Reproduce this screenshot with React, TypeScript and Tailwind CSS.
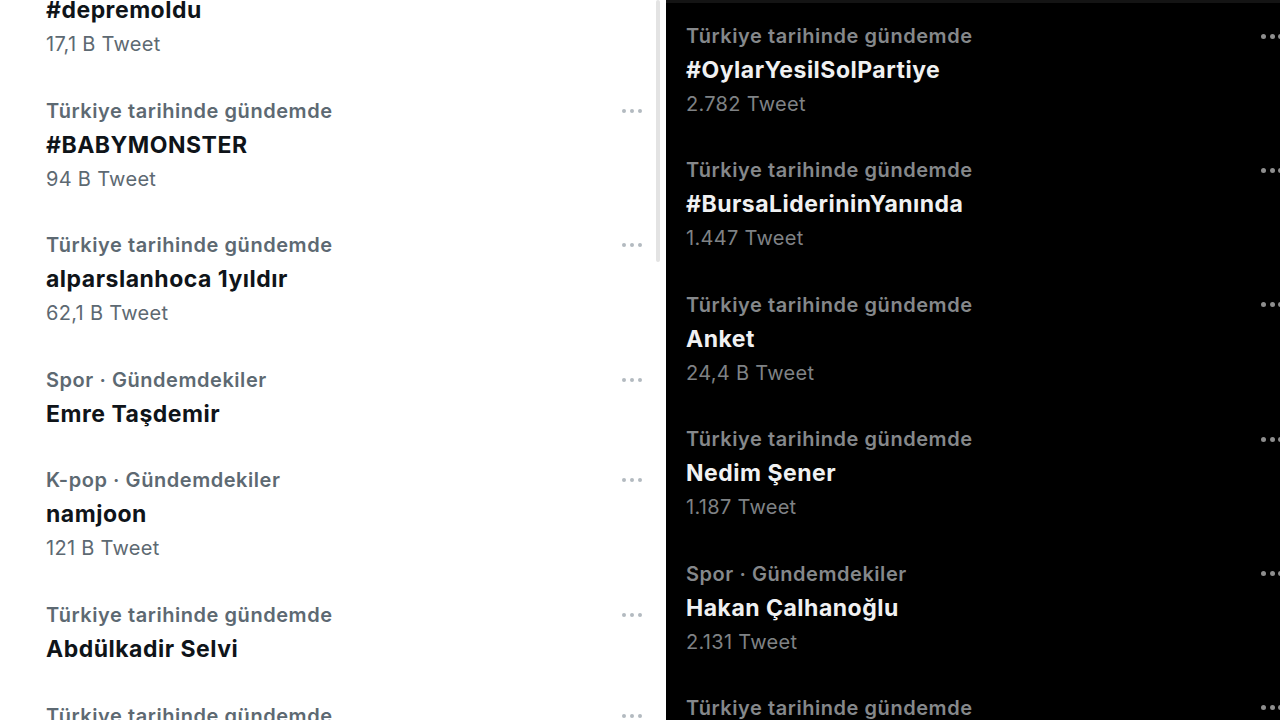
import React from 'react';

interface Trend {
  label: string;
  title: string;
  count?: string;
}

const leftTrends: Trend[] = [
  { label: 'Türkiye tarihinde gündemde', title: '#depremoldu', count: '17,1 B Tweet' },
  { label: 'Türkiye tarihinde gündemde', title: '#BABYMONSTER', count: '94 B Tweet' },
  { label: 'Türkiye tarihinde gündemde', title: 'alparslanhoca 1yıldır', count: '62,1 B Tweet' },
  { label: 'Spor · Gündemdekiler', title: 'Emre Taşdemir' },
  { label: 'K-pop · Gündemdekiler', title: 'namjoon', count: '121 B Tweet' },
  { label: 'Türkiye tarihinde gündemde', title: 'Abdülkadir Selvi' },
  { label: 'Türkiye tarihinde gündemde', title: 'Kemal Kılıçdaroğlu', count: '88 B Tweet' },
];

const rightTrends: Trend[] = [
  { label: 'Türkiye tarihinde gündemde', title: '#OylarYesilSolPartiye', count: '2.782 Tweet' },
  { label: 'Türkiye tarihinde gündemde', title: '#BursaLiderininYanında', count: '1.447 Tweet' },
  { label: 'Türkiye tarihinde gündemde', title: 'Anket', count: '24,4 B Tweet' },
  { label: 'Türkiye tarihinde gündemde', title: 'Nedim Şener', count: '1.187 Tweet' },
  { label: 'Spor · Gündemdekiler', title: 'Hakan Çalhanoğlu', count: '2.131 Tweet' },
  { label: 'Türkiye tarihinde gündemde', title: 'Muharrem İnce', count: '45 B Tweet' },
];

const Dots: React.FC<{ dark?: boolean }> = ({ dark }) => (
  <div className={`flex items-center h-[34px] ${dark ? 'gap-[3.5px] mr-[-3px]' : 'gap-[4px] mr-[1px]'}`}>
    {[0, 1, 2].map(i => (
      <span
        key={i}
        className={`rounded-full ${dark ? 'w-[5px] h-[5px] bg-[#8e8e8e]' : 'w-[4px] h-[4px] bg-[#b3bac0]'}`}
      />
    ))}
  </div>
);

const TrendRow: React.FC<{ trend: Trend; dark?: boolean }> = ({ trend, dark }) => (
  <div className={`flex justify-between items-start pt-[16px] ${dark ? 'pb-[16.4px]' : 'pb-[16.6px]'}`}>
    <div className="flex flex-col whitespace-nowrap">
      <span className={`text-[20px] leading-[34px] font-semibold tracking-[0.55px] ${dark ? 'text-[#85888b]' : 'text-[#5d6972]'}`}>
        {trend.label}
      </span>
      <span className={`text-[23px] leading-[34px] font-bold tracking-[0.5px] ${dark ? 'text-[#f0f1f2]' : 'text-[#0f1419]'}`}>
        {trend.title}
      </span>
      {trend.count && (
        <span className={`text-[20px] leading-[34px] tracking-[0.3px] ${dark ? 'text-[#7f8285]' : 'text-[#5d6972]'}`}>
          {trend.count}
        </span>
      )}
    </div>
    <Dots dark={dark} />
  </div>
);

export default function App() {
  return (
    <div className="flex w-[1280px] h-[720px] overflow-hidden" style={{ fontFamily: 'Inter, "Noto Sans", sans-serif' }}>
      <div className="flex w-[666px] bg-white">
        <div className="flex-1 flex flex-col pl-[46px] pr-[13px] mt-[-57px]">
          {leftTrends.map((t, i) => (
            <TrendRow key={i} trend={t} />
          ))}
        </div>
        <div className="w-[4px]">
          <div className="h-[262px] bg-[#e3e3e3] rounded-full" />
        </div>
        <div className="w-[6px]" />
      </div>
      <div className="flex-1 bg-black border-t-[3px] border-[#141414] overflow-hidden">
        <div className="flex flex-col pl-[20px]">
          {rightTrends.map((t, i) => (
            <TrendRow key={i} trend={t} dark />
          ))}
        </div>
      </div>
    </div>
  );
}
